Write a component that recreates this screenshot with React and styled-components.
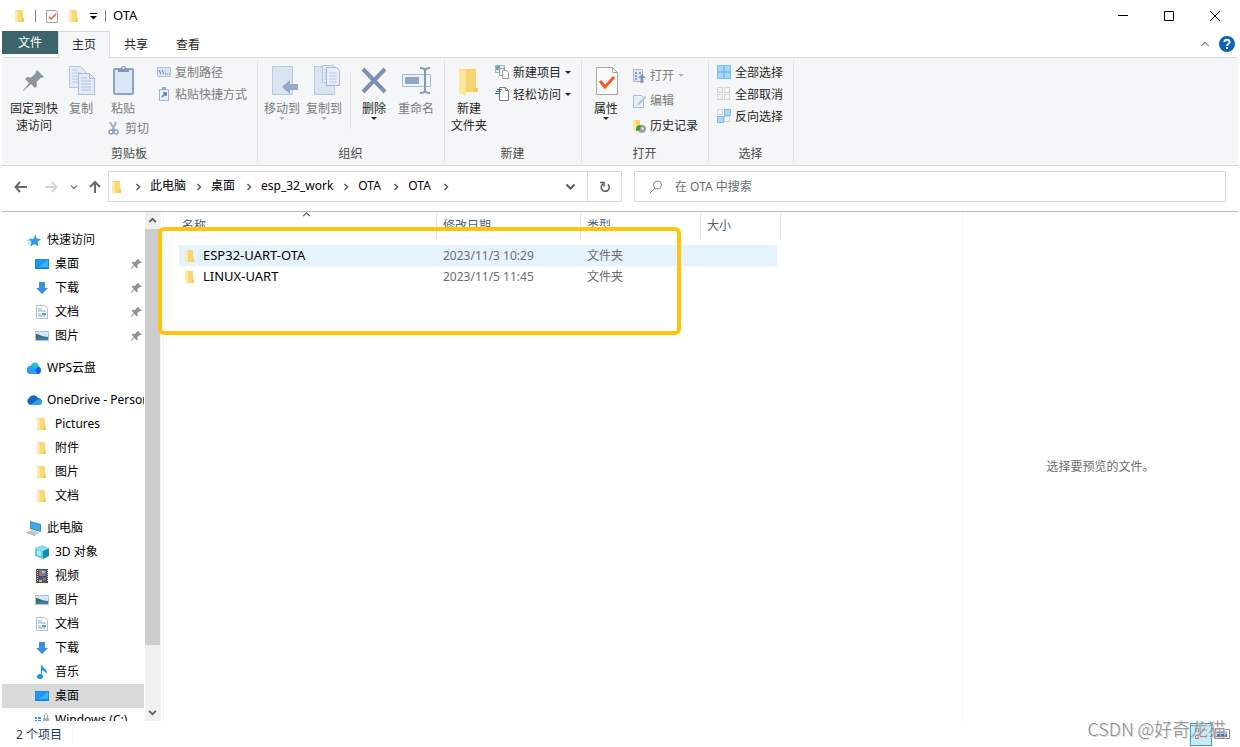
import React, { useState } from 'react';
import styled, { createGlobalStyle } from 'styled-components';

const GlobalStyle = createGlobalStyle`
  * {
    box-sizing: border-box;
  }

  body {
    margin: 0;
    background-color: #ffffff;
  }

  body, button, input, table {
    font-family: "Noto Sans", "Noto Sans CJK SC", sans-serif;
    font-size: 12px;
    line-height: 17px;
    color: #000000;
  }

  button {
    padding: 0;
    border: none;
    background: transparent;
  }

  svg {
    display: block;
    flex: none;
  }
`;

const PageWrapper = styled.div`
  position: relative;
  height: 100vh;
  padding: 0 2px;
  display: flex;
  flex-direction: column;
  overflow: hidden;
`;

const TitleBar = styled.header`
  height: 31px;
  flex: none;
  padding-left: 10px;
  display: flex;
  align-items: center;
  gap: 7px;
`;

const TitleDivider = styled.span`
  width: 1px;
  height: 12px;
  background-color: #808080;
`;

const WindowTitle = styled.span`
  font-size: 13px;
`;

const WindowButtons = styled.div`
  margin-left: auto;
  align-self: stretch;
  display: flex;
`;

const WindowButton = styled.button`
  width: 46px;
  display: flex;
  align-items: center;
  justify-content: center;
`;

const TabRow = styled.nav`
  height: 27px;
  flex: none;
  display: flex;
  border-bottom: 1px solid #dadbdc;
`;

const FileTab = styled.button`
  width: 56px;
  height: 23px;
  color: #ffffff;
  background-color: #3d646a;
`;

const Tab = styled.button`
  width: 52px;
  height: 27px;
  padding-bottom: 2px;
  color: #262626;
  border: 1px solid ${({ $active }) => ($active ? '#dadbdc' : 'transparent')};
  border-bottom: none;
  background-color: ${({ $active }) => ($active ? '#f5f6f7' : 'transparent')};
`;

const TabTools = styled.div`
  margin-left: auto;
  padding-right: 3px;
  display: flex;
  align-items: center;
  gap: 9px;
`;

const RibbonWrapper = styled.div`
  height: 108px;
  flex: none;
  display: flex;
  background-color: #f5f6f7;
  border-bottom: 1px solid #dadbdc;
`;

const Group = styled.section`
  position: relative;
  display: flex;
  flex-direction: column;

  &::after {
    content: '';
    position: absolute;
    top: 2px;
    right: 0;
    bottom: 3px;
    width: 1px;
    background-color: #e2e3e4;
  }
`;

const GroupBody = styled.div`
  height: 87px;
  padding-right: ${({ $right }) => $right}px;
  padding-left: ${({ $left }) => $left || 0}px;
  display: flex;
  align-items: flex-start;
`;

const GroupTitle = styled.h2`
  margin: 0;
  padding-right: 2px;
  font-size: 12px;
  font-weight: normal;
  color: #4a4a4a;
  text-align: center;
`;

const LargeButton = styled.button`
  width: ${({ $width }) => $width || 42}px;
  padding-top: 7px;
  display: flex;
  flex-direction: column;
  align-items: center;
  color: ${({ disabled }) => (disabled ? '#7b7b7b' : '#262626')};
  white-space: pre;
`;

const LargeLabel = styled.span`
  margin-top: 3px;
`;

const ButtonColumn = styled.div`
  padding-top: ${({ $top }) => $top || 0}px;
  margin-left: ${({ $left }) => $left || 0}px;
  display: flex;
  flex-direction: column;
`;

const SmallButton = styled.button`
  height: ${({ $height }) => $height || 22}px;
  padding-left: ${({ $indent }) => $indent || 0}px;
  display: flex;
  align-items: center;
  gap: 4px;
  white-space: nowrap;
  color: ${({ disabled }) => (disabled ? '#7b7b7b' : '#262626')};
`;

const BodyDivider = styled.span`
  width: 1px;
  height: 56px;
  margin: 15px 2px 0 5px;
  background-color: #e2e3e4;
`;

const NavRow = styled.div`
  flex: none;
  padding: 5px 12px 9px 4px;
  display: flex;
  border-bottom: 1px solid #b9b9b9;
`;

const NavButton = styled.button`
  width: ${({ $width }) => $width}px;
  display: flex;
  align-items: center;
  justify-content: center;
`;

const AddressBox = styled.div`
  height: 31px;
  flex: 0 1 514px;
  display: flex;
  align-items: center;
  border: 1px solid #d9d9d9;
`;

const Crumb = styled.button`
  min-width: 25px;
  padding-bottom: 2px;
  text-align: left;
  white-space: nowrap;
`;

const ChevronSlot = styled.span`
  width: 25px;
  display: flex;
  justify-content: center;
`;

const AddressTool = styled.button`
  width: 34px;
  align-self: stretch;
  display: flex;
  align-items: center;
  justify-content: center;
  margin-left: ${({ $last }) => ($last ? '0' : 'auto')};
  border-left: ${({ $last }) => ($last ? '1px solid #d9d9d9' : 'none')};
`;

const SearchBox = styled.label`
  height: 31px;
  flex: 1;
  margin-left: 12px;
  padding-left: 13px;
  display: flex;
  align-items: center;
  gap: 11px;
  border: 1px solid #d9d9d9;
`;

const SearchInput = styled.input`
  flex: 1;
  padding: 0;
  border: none;
  outline: none;

  &::placeholder {
    color: #6d6d6d;
    opacity: 1;
  }
`;

const Main = styled.main`
  flex: 1;
  min-height: 0;
  display: flex;
`;

const Sidebar = styled.aside`
  width: 142px;
  flex: none;
  padding-top: 16px;
  overflow: hidden;
`;

const TreeGroup = styled.div`
  margin-bottom: 8px;
`;

const TreeItem = styled.button`
  width: 100%;
  height: 24px;
  padding-left: ${({ $child }) => ($child ? 32 : 24)}px;
  padding-right: 2px;
  display: flex;
  align-items: center;
  gap: 5px;
  white-space: nowrap;
  background-color: ${({ $selected }) => ($selected ? '#d9d9d9' : 'transparent')};
`;

const TreeLabel = styled.span`
  padding-bottom: 2px;
`;

const PinSlot = styled.span`
  margin-left: auto;
`;

const ScrollBar = styled.div`
  width: 16px;
  flex: none;
  margin-left: 1px;
  display: flex;
  flex-direction: column;
  background-color: #f0f0f0;
  border-right: 1px solid #f8f8f8;
`;

const ScrollArrow = styled.button`
  height: 17px;
  display: flex;
  align-items: center;
  justify-content: center;
`;

const ScrollThumb = styled.div`
  flex: 7;
  background-color: #cdcdcd;
`;

const ScrollRest = styled.div`
  flex: 1;
`;

const FilePane = styled.div`
  flex: 1;
  min-width: 0;
  margin-left: 2px;
  padding-left: 15px;
  border-left: 1px solid #f2f2f2;
`;

const FileTable = styled.table`
  width: 602px;
  table-layout: fixed;
  border-collapse: separate;
  border-spacing: 0;

  tbody::before {
    content: '';
    display: block;
    height: 5px;
  }
`;

const HeaderCell = styled.th`
  position: relative;
  width: ${({ $width }) => $width}px;
  height: 28px;
  padding: 0 0 2px ${({ $first }) => ($first ? 3 : 6)}px;
  font-weight: normal;
  text-align: left;
  color: #4c607a;
  border-right: 1px solid #e5e5e5;
`;

const SortMark = styled.span`
  position: absolute;
  top: -2px;
  left: 50%;
  margin-left: -6px;
`;

const Row = styled.tr`
  td {
    background-color: ${({ $selected }) => ($selected ? '#e5f3ff' : 'transparent')};
  }
`;

const Cell = styled.td`
  height: 21px;
  padding: 0 0 0 6px;
  color: #6d6d6d;

  &:last-child {
    border-right: 4px solid transparent;
    background-clip: padding-box;
  }
`;

const FileName = styled.span`
  margin-left: -3px;
  display: flex;
  align-items: center;
  gap: 5px;
  font-size: 13px;
  color: #000000;
`;

const Preview = styled.aside`
  width: 276px;
  flex: none;
  display: flex;
  align-items: center;
  justify-content: center;
  color: #6d6d6d;
  border-left: 1px solid #f5f5f5;
`;

const StatusBar = styled.footer`
  height: 26px;
  flex: none;
  padding: 0 7px 0 14px;
  display: flex;
  align-items: center;
  color: #1e395b;
`;

const StatusCount = styled.span`
  padding-right: 10px;
  border-right: 1px solid #f2f2f2;
`;

const ViewButtons = styled.div`
  margin-left: auto;
  display: flex;
`;

const ViewButton = styled.button`
  width: ${({ $active }) => ($active ? 22 : 19)}px;
  height: 23px;
  display: flex;
  align-items: center;
  justify-content: center;
  border: ${({ $active }) => ($active ? '1px solid #26a0da' : 'none')};
  background-color: ${({ $active }) => ($active ? '#cbe8f6' : 'transparent')};
`;

const Highlight = styled.div`
  position: absolute;
  top: 227px;
  left: 158px;
  width: 523px;
  height: 108px;
  border: 4px solid #ffc40c;
  border-radius: 6px;
  pointer-events: none;
`;

const Watermark = styled.div`
  position: absolute;
  right: 14px;
  bottom: 7px;
  font-family: "Noto Sans CJK SC", sans-serif;
  font-size: 18px;
  font-weight: 300;
  line-height: 24px;
  color: #8c8c8c;
  text-shadow: 1px 1px 0 #d8d8d8;
  pointer-events: none;
`;

const Svg = ({ size = 16, w, h, children }) => (
  <svg width={w || size} height={h || size} viewBox={`0 0 ${w || size} ${h || size}`} fill="none" aria-hidden="true">
    {children}
  </svg>
);

const FolderIcon = () => (
  <Svg>
    <path d="M3 2h8v12H3z" fill="#f8d775" />
    <path d="M11 10h1v4h-3z" fill="#f3c75a" />
    <path d="M3 2l3 1v12l-3-1z" fill="#ffe9a6" />
  </Svg>
);

const CheckPageIcon = () => (
  <Svg>
    <path d="M3.500 2.500h9l2 2v10h-11z" fill="#f7f7f7" stroke="#a3a3a3" />
    <path d="M6 9l2 2 5-5" stroke="#e8643a" strokeWidth="1.500" />
  </Svg>
);

const DropIcon = ({ color = '#262626' }) => (
  <Svg w={6} h={3}>
    <path d="M0 0h6L3 3z" fill={color} />
  </Svg>
);

const Chevron = ({ dir = 'right', color = '#5c5c5c', size = 8, width = 1.5 }) => {
  const paths = {
    right: 'M2.500 1l3 3-3 3',
    down: 'M1 2.500l3 3 3-3',
    up: 'M1 5.500l3-3 3 3',
  };
  return (
    <svg width={size} height={size} viewBox="0 0 8 8" fill="none" aria-hidden="true">
      <path d={paths[dir]} stroke={color} strokeWidth={width} />
    </svg>
  );
};

const PinIcon = ({ size = 12 }) => (
  <svg width={size} height={size} viewBox="0 0 24 24" aria-hidden="true">
    <path d="M15 1l8 8-2 1.500-1.500-.5-4.500 4 .5 5-2 2-4.500-5L2 22.500 1 22l6.500-8L3 9.500l2-2 5 .5 4-4.500z" fill="#8b969f" />
  </svg>
);

const BigPinIcon = () => (
  <Svg size={32}>
    <path d="M19 5l7 7-2 1-1-.5-4.500 4.500.5 4-2 2-4-4-7.500 7-.5-.5 6-7.500-4-4 2-2 4 .5 5-4.500-.5-1z" fill="#8b969f" />
  </Svg>
);

const BigCopyIcon = () => (
  <Svg size={32}>
    <path d="M4.500 1.500h11l5 5v16h-16z" fill="#e3ebf6" stroke="#b5c5dc" />
    <path d="M7 8h9M7 11h8M7 14h8M7 17h8M7 5h6" stroke="#b9cae2" />
    <path d="M13.500 8.500h11l5 5v16h-16z" fill="#e3ebf6" stroke="#a9bbd5" />
    <path d="M24.500 8.500v5h5" stroke="#a9bbd5" />
    <path d="M16 13h6M16 16h10M16 19h10M16 22h10M16 25h10" stroke="#aec1dc" />
  </Svg>
);

const BigPasteIcon = () => (
  <Svg size={32}>
    <rect x="7" y="4" width="19" height="25" rx="1" fill="#dce7f5" stroke="#8fa3c4" strokeWidth="2" />
    <path d="M11 7V4h3c0-4 5-4 5 0h3v3z" fill="#8496b5" />
    <circle cx="16.500" cy="3" r="1" fill="#f5f6f7" />
  </Svg>
);

const BigMoveIcon = () => (
  <Svg size={32}>
    <path d="M6.500 1.500h20v28h-20z" fill="#dbe5f2" stroke="#b9c8dd" />
    <path d="M16 22l8-7v4h8v6h-8v4z" fill="#97a9c4" />
  </Svg>
);

const BigCopyToIcon = () => (
  <Svg size={32}>
    <path d="M6.500 1.500h20v28h-20z" fill="#dbe5f2" stroke="#b9c8dd" />
    <path d="M14.500.500h11l3 3v14h-14z" fill="#e8eff8" stroke="#b0c1d9" />
    <path d="M18.500 2.500h10l3 3v15h-13z" fill="#e8eff8" stroke="#a3b6d2" />
    <path d="M21 8h8M21 11h8M21 14h8M21 17h8M16 5h2M16 8h2M16 11h2M16 14h2" stroke="#b3c4dd" />
  </Svg>
);

const BigDeleteIcon = () => (
  <Svg size={32}>
    <path d="M5 4l22 23M27 4L5 27" stroke="#7f91b0" strokeWidth="4" />
  </Svg>
);

const BigRenameIcon = () => (
  <Svg size={32}>
    <path d="M2.500 9.500h28v12h-28z" fill="#edf3fa" stroke="#a9bad3" />
    <path d="M5 12h14v7H5z" fill="#92a5c4" />
    <path d="M20 3c3 0 5 1 5 3 0-2 2-3 5-3M25 5v22M20 28c3 0 5-1 5-3 0 2 2 3 5 3" stroke="#8598b8" strokeWidth="2" />
  </Svg>
);

const BigFolderIcon = () => (
  <Svg size={32}>
    <path d="M7 4h16v23H7z" fill="#f6d574" />
    <path d="M20 23h5v4h-5z" fill="#f3c75a" />
    <path d="M6 3l7 3v25l-7-3z" fill="#ffe69a" />
  </Svg>
);

const BigPropertiesIcon = () => (
  <Svg size={32}>
    <path d="M6.500 2.500h16l5 5v22h-21z" fill="#fafafa" stroke="#a6a6a6" />
    <path d="M22.500 2.500v5h5" stroke="#a6a6a6" />
    <path d="M10 16l5 6 9-10" stroke="#ef5a24" strokeWidth="3" />
  </Svg>
);

const CopyPathIcon = () => (
  <Svg size={14}>
    <path d="M.500 2.500h13v9H.500z" fill="#d9e4f3" stroke="#b4c4dc" />
    <path d="M2 5l2 4M5 5l2 4M8 9h1M10 9h1M12 9h1" stroke="#6d80a3" />
  </Svg>
);

const PasteShortcutIcon = () => (
  <Svg size={14}>
    <path d="M2.500 2.500h9v11h-9z" fill="#e4edf8" stroke="#9fb2ce" />
    <path d="M5 0h4v3H5z" fill="#9aacc8" />
    <path d="M5 10l4-4M6 6h3v3" stroke="#5e759f" strokeWidth="1.500" />
  </Svg>
);

const CutIcon = () => (
  <Svg size={14}>
    <path d="M3 1l5 9M9 1L5 10" stroke="#a4b1c6" strokeWidth="2" />
    <circle cx="4" cy="11" r="2" stroke="#8f9fba" strokeWidth="1.500" />
    <circle cx="9" cy="11" r="2" stroke="#8f9fba" strokeWidth="1.500" />
  </Svg>
);

const NewItemIcon = () => (
  <Svg size={14}>
    <path d="M.500.500h9v7h-9z" fill="#e5f0f5" stroke="#a3b5bd" />
    <path d="M1 1h4v4H1z" fill="#6fa3b6" />
    <path d="M4.500 3.500h5v7h-5z" fill="#f2f2f2" stroke="#9b9b9b" />
    <path d="M7.500 5.500h4l2 2v6h-6z" fill="#fafafa" stroke="#9b9b9b" />
  </Svg>
);

const EasyAccessIcon = () => (
  <Svg size={14}>
    <path d="M4.500.500h6l3 3v10h-9z" fill="#ffffff" stroke="#7d7d7d" />
    <path d="M10.500.500v3h3" stroke="#7d7d7d" />
    <path d="M2 2.500h5M1 4.500h5M0 6.500h5" stroke="#2c6ca5" />
  </Svg>
);

const OpenIcon = () => (
  <Svg size={14}>
    <path d="M1.500.500h9v12h-9z" fill="#dde7f4" stroke="#a9b9d2" />
    <path d="M3 3h2v2H3zM3 6h2v2H3zM3 9h2v2H3zM7 3h2v2H7z" fill="#8d9fbd" />
    <path d="M10 5l4 4h-2.500v5h-3V9H6z" fill="#8597b7" />
  </Svg>
);

const EditIcon = () => (
  <Svg size={14}>
    <path d="M1.500 1.500h8l2 2v10h-10z" fill="#e6eef8" stroke="#abbbd3" />
    <path d="M5 12l1-3 7-7 1.500 1.500-7 7z" fill="#b5c5dd" />
  </Svg>
);

const HistoryIcon = () => (
  <Svg size={14}>
    <path d="M1 1h7v10H1z" fill="#f6d06b" />
    <path d="M1 1l3 1v11l-3-1z" fill="#ffe69a" />
    <circle cx="10" cy="10" r="4" fill="#9da3a3" />
    <path d="M10 8v2h2" stroke="#ffffff" />
    <path d="M4 12c0-4 1-6 5-6l-1 5z" fill="#32a042" />
  </Svg>
);

// on: which of the four tiles are filled
const TilesIcon = ({ on }) => (
  <Svg size={14}>
    {[[0, 0], [7, 0], [0, 7], [7, 7]].map(([x, y], i) => (
      <rect
        key={i}
        x={x + 0.5}
        y={y + 0.5}
        width={on[i] ? 6 : 5}
        height={on[i] ? 6 : 5}
        fill={on[i] ? '#a6d8fc' : '#f4f4f4'}
        stroke={on[i] ? '#7fbfe9' : '#d4d4d4'}
      />
    ))}
  </Svg>
);

const StarIcon = () => (
  <Svg>
    <path d="M9.500 2l1 4.500 4.500.5-3.500 3 1 4.500L8.500 12 4 14.500 5.500 10 2.500 6.500l5 .5z" fill="#2d9be8" />
    <path d="M2 12l3-2M1 9l3-1" stroke="#8ccaf5" />
  </Svg>
);

const DesktopIcon = () => (
  <Svg>
    <path d="M1 3h14v10H1z" fill="#1583d8" />
    <path d="M1.500 3.500h13v8h-13z" fill="#199bf5" />
    <path d="M14 4v7H5z" fill="#3db0fb" />
  </Svg>
);

const DownloadIcon = () => (
  <Svg>
    <path d="M5 2h6v6h3l-6 6-6-6h3z" fill="#3b93e0" />
  </Svg>
);

const DocIcon = () => (
  <Svg>
    <path d="M2.500 1.500h8l3 3v10h-11z" fill="#fcfcfc" stroke="#b8bfc4" />
    <path d="M4 5h4M4 7h8M4 10h3M4 12h8" stroke="#7fb0d2" />
    <path d="M8 9h4v2H8z" fill="#5b9bc8" />
  </Svg>
);

const PictureIcon = () => (
  <Svg>
    <path d="M1.500 3.500h13v9h-13z" fill="#cfe9fa" stroke="#b5bdc3" />
    <path d="M2 6c4 0 5 3 12 3v1H2z" fill="#3e6f6a" />
    <path d="M2 10h12v2H2z" fill="#3b7eb5" />
  </Svg>
);

const WpsIcon = () => (
  <Svg>
    <path d="M5 14a4 4 0 0 1 0-8A4 4 0 0 1 12 6c4 1 4 8 0 8z" fill="#1b5cf2" />
    <path d="M5 14a4 4 0 0 1 0-8c3 0 5 4 6 8z" fill="#2a9df4" />
    <path d="M5 6c0-4 7-5 7.500 0L9 10C8 8 7 6 5 6z" fill="#1fc6c8" />
  </Svg>
);

const OneDriveIcon = () => (
  <Svg>
    <path d="M4 13a4 4 0 0 1-1-7A5 5 0 0 1 12 6c5 0 5 7 1 7z" fill="#0f6cbd" />
    <path d="M4 13l9-6c4 1 3 6 0 6z" fill="#2aa3ea" />
  </Svg>
);

const ComputerIcon = () => (
  <Svg>
    <path d="M4 1l11 3v8L4 9z" fill="#4b87ad" />
    <path d="M5 2l9 3v6L5 8z" fill="#37aaf2" />
    <path d="M1 12l5-2 8 3-5 2z" fill="#c3c9ce" />
    <path d="M1 12l8 3v1l-8-3z" fill="#8c969d" />
  </Svg>
);

const CubeIcon = () => (
  <Svg>
    <path d="M1 4l7-3 7 3-6 3z" fill="#83dff0" />
    <path d="M1 4l8 3v8l-8-3z" fill="#5fcde3" />
    <path d="M9 7l6-3v8l-6 3z" fill="#138fb0" />
    <path d="M3 6l4 1v5l-4-1z" fill="#a9eaf5" />
  </Svg>
);

const VideoIcon = () => (
  <Svg>
    <path d="M2 1h12v14H2z" fill="#4b4b4b" />
    <path d="M5 2h7v6H5z" fill="#5c7fc4" />
    <path d="M5 9h7v5H5z" fill="#3560a8" />
    <path d="M5 5h3v3H5zM9 10h3v2H9z" fill="#d5622d" />
    <path d="M8 3h3v2H8zM5 12h3v2H5z" fill="#e0bd3f" />
    <path d="M3.500 2v12M13.500 2v12" stroke="#cfcfcf" strokeDasharray="1 1" />
  </Svg>
);

const MusicIcon = () => (
  <Svg>
    <path d="M8 1c0 3 6 4 5 9-1-2-3-3-5-4v7H7V1z" fill="#1b93e6" />
    <ellipse cx="6" cy="12.500" rx="3" ry="2.500" fill="#1b93e6" />
  </Svg>
);

const DriveIcon = () => (
  <Svg>
    <path d="M1 5h2v2H1zM4 5h3v2H4zM1 8h2v3H1zM4 8h3v3H4z" fill="#18a3e8" />
    <path d="M9 6h6v6H9z" fill="#a8adb1" />
    <path d="M10.500 6V4c0-3 3-3 3 0v2" stroke="#a8adb1" />
  </Svg>
);

const SearchIcon = () => (
  <Svg>
    <circle cx="9.500" cy="6" r="4" stroke="#8585a0" />
    <path d="M7 9l-5 5" stroke="#8585a0" />
  </Svg>
);

const RefreshIcon = () => (
  <Svg size={14}>
    <path d="M5 4A4 4 0 1 0 10 4.500" stroke="#5c5c5c" strokeWidth="1.500" />
    <path d="M2 2.500h4v4" stroke="#5c5c5c" strokeWidth="1.500" />
  </Svg>
);

const ArrowIcon = ({ d, color }) => (
  <Svg>
    <path d={d} stroke={color} strokeWidth="2" />
  </Svg>
);

const HelpIcon = () => (
  <Svg>
    <circle cx="8" cy="8" r="8" fill="#0b62c1" />
    <path d="M5.500 6c0-3 5-3 5 0 0 2-2.500 1.500-2.500 4M8 11v2" stroke="#ffffff" strokeWidth="2" />
  </Svg>
);

const tree = [
  [
    { name: '快速访问', Icon: StarIcon },
    { name: '桌面', Icon: DesktopIcon, pinned: true },
    { name: '下载', Icon: DownloadIcon, pinned: true },
    { name: '文档', Icon: DocIcon, pinned: true },
    { name: '图片', Icon: PictureIcon, pinned: true },
  ],
  [{ name: 'WPS云盘', Icon: WpsIcon }],
  [
    { name: 'OneDrive - Personal', Icon: OneDriveIcon },
    { name: 'Pictures', Icon: FolderIcon },
    { name: '附件', Icon: FolderIcon },
    { name: '图片', Icon: FolderIcon },
    { name: '文档', Icon: FolderIcon },
  ],
  [
    { name: '此电脑', Icon: ComputerIcon },
    { name: '3D 对象', Icon: CubeIcon },
    { name: '视频', Icon: VideoIcon },
    { name: '图片', Icon: PictureIcon },
    { name: '文档', Icon: DocIcon },
    { name: '下载', Icon: DownloadIcon },
    { name: '音乐', Icon: MusicIcon },
    { name: '桌面', Icon: DesktopIcon },
    { name: 'Windows (C:)', Icon: DriveIcon },
  ],
];

const crumbs = ['此电脑', '桌面', 'esp_32_work', 'OTA', 'OTA'];

const files = [
  { name: 'ESP32-UART-OTA', date: '2023/11/3 10:29', type: '文件夹' },
  { name: 'LINUX-UART', date: '2023/11/5 11:45', type: '文件夹' },
];

const Large = ({ icon, label, width, drop, disabled }) => (
  <LargeButton $width={width} disabled={disabled}>
    {icon}
    <LargeLabel>{label}</LargeLabel>
    {drop && <DropIcon color={disabled ? '#b5b5b5' : '#262626'} />}
  </LargeButton>
);

const Small = ({ icon, label, height, indent, drop, disabled }) => (
  <SmallButton $height={height} $indent={indent} disabled={disabled}>
    {icon}
    {label}
    {drop && <DropIcon color={disabled ? '#b5b5b5' : '#262626'} />}
  </SmallButton>
);

const Ribbon = () => (
  <RibbonWrapper>
    <Group>
      <GroupBody $left={6} $right={11}>
        <Large width={52} icon={<BigPinIcon />} label={'固定到快\n速访问'} />
        <Large icon={<BigCopyIcon />} label="复制" disabled />
        <ButtonColumn>
          <Large icon={<BigPasteIcon />} label="粘贴" disabled />
          <Small indent={5} icon={<CutIcon />} label="剪切" disabled />
        </ButtonColumn>
        <ButtonColumn $top={3} $left={8}>
          <Small icon={<CopyPathIcon />} label="复制路径" disabled />
          <Small icon={<PasteShortcutIcon />} label="粘贴快捷方式" disabled />
        </ButtonColumn>
      </GroupBody>
      <GroupTitle>剪贴板</GroupTitle>
    </Group>
    <Group>
      <GroupBody $left={3} $right={8}>
        <Large icon={<BigMoveIcon />} label="移动到" drop disabled />
        <Large icon={<BigCopyToIcon />} label="复制到" drop disabled />
        <BodyDivider />
        <Large icon={<BigDeleteIcon />} label="删除" drop />
        <Large icon={<BigRenameIcon />} label="重命名" disabled />
      </GroupBody>
      <GroupTitle>组织</GroupTitle>
    </Group>
    <Group>
      <GroupBody $right={11}>
        <Large width={48} icon={<BigFolderIcon />} label={'新建\n文件夹'} />
        <ButtonColumn $top={3} $left={2}>
          <Small icon={<NewItemIcon />} label="新建项目" drop />
          <Small icon={<EasyAccessIcon />} label="轻松访问" drop />
        </ButtonColumn>
      </GroupBody>
      <GroupTitle>新建</GroupTitle>
    </Group>
    <Group>
      <GroupBody $right={11}>
        <Large width={48} icon={<BigPropertiesIcon />} label="属性" drop />
        <ButtonColumn $top={5} $left={2}>
          <Small height={25} icon={<OpenIcon />} label="打开" drop disabled />
          <Small height={25} icon={<EditIcon />} label="编辑" disabled />
          <Small height={25} icon={<HistoryIcon />} label="历史记录" />
        </ButtonColumn>
      </GroupBody>
      <GroupTitle>打开</GroupTitle>
    </Group>
    <Group>
      <GroupBody $left={8} $right={11}>
        <ButtonColumn $top={3}>
          <Small icon={<TilesIcon on={[1, 1, 1, 1]} />} label="全部选择" />
          <Small icon={<TilesIcon on={[0, 0, 0, 0]} />} label="全部取消" />
          <Small icon={<TilesIcon on={[0, 1, 1, 0]} />} label="反向选择" />
        </ButtonColumn>
      </GroupBody>
      <GroupTitle>选择</GroupTitle>
    </Group>
  </RibbonWrapper>
);

const App = () => {
  const [activeTab, setActiveTab] = useState('主页');
  const [selectedNode, setSelectedNode] = useState('3-7');
  const [selectedFile, setSelectedFile] = useState(0);
  const [query, setQuery] = useState('');

  return (
    <PageWrapper>
      <GlobalStyle />
      <TitleBar>
        <FolderIcon />
        <TitleDivider />
        <CheckPageIcon />
        <FolderIcon />
        <Svg w={9} h={8}>
          <path d="M1 1.500h7" stroke="#000000" />
          <path d="M1 4h7L4.500 7.500z" fill="#000000" />
        </Svg>
        <TitleDivider />
        <WindowTitle>OTA</WindowTitle>
        <WindowButtons>
          <WindowButton aria-label="最小化">
            <Svg size={10}><path d="M0 4.500h10" stroke="#000000" /></Svg>
          </WindowButton>
          <WindowButton aria-label="最大化">
            <Svg size={10}><path d="M.500.500h9v9h-9z" stroke="#000000" /></Svg>
          </WindowButton>
          <WindowButton aria-label="关闭">
            <Svg size={10}><path d="M0 0l10 10M10 0L0 10" stroke="#000000" /></Svg>
          </WindowButton>
        </WindowButtons>
      </TitleBar>

      <TabRow>
        <FileTab>文件</FileTab>
        {['主页', '共享', '查看'].map((tab) => (
          <Tab key={tab} $active={tab === activeTab} onClick={() => setActiveTab(tab)}>
            {tab}
          </Tab>
        ))}
        <TabTools>
          <button aria-label="折叠功能区"><Chevron dir="up" color="#8c8c8c" size={10} width={1} /></button>
          <button aria-label="帮助"><HelpIcon /></button>
        </TabTools>
      </TabRow>

      <Ribbon />

      <NavRow>
        <NavButton $width={30} aria-label="后退">
          <ArrowIcon d="M14 8H3M7 3L2.500 8 7 13" color="#6b6b6b" />
        </NavButton>
        <NavButton $width={30} aria-label="前进">
          <ArrowIcon d="M2 8h11M9 3l4.500 5L9 13" color="#d6d6d6" />
        </NavButton>
        <NavButton $width={16} aria-label="最近浏览的位置">
          <Chevron dir="down" color="#7d7d7d" />
        </NavButton>
        <NavButton $width={26} aria-label="上移">
          <ArrowIcon d="M8 14V3M3 8l5-5 5 5" color="#6b6b6b" />
        </NavButton>
        <AddressBox>
          <FolderIcon />
          <ChevronSlot><Chevron /></ChevronSlot>
          {crumbs.map((crumb, i) => (
            <React.Fragment key={`crumb-${i}`}>
              <Crumb>{crumb}</Crumb>
              <ChevronSlot><Chevron /></ChevronSlot>
            </React.Fragment>
          ))}
          <AddressTool aria-label="以前的位置"><Chevron dir="down" size={11} /></AddressTool>
          <AddressTool $last aria-label="刷新"><RefreshIcon /></AddressTool>
        </AddressBox>
        <SearchBox>
          <SearchIcon />
          <SearchInput
            aria-label="搜索"
            placeholder="在 OTA 中搜索"
            value={query}
            onChange={(e) => setQuery(e.target.value)}
          />
        </SearchBox>
      </NavRow>

      <Main>
        <Sidebar>
          {tree.map((nodes, g) => (
            <TreeGroup key={`group-${g}`}>
              {nodes.map(({ name, Icon, pinned }, i) => (
                <TreeItem
                  key={`node-${g}-${i}`}
                  $child={i > 0}
                  $selected={selectedNode === `${g}-${i}`}
                  onClick={() => setSelectedNode(`${g}-${i}`)}
                >
                  <Icon />
                  <TreeLabel>{name}</TreeLabel>
                  {pinned && <PinSlot><PinIcon /></PinSlot>}
                </TreeItem>
              ))}
            </TreeGroup>
          ))}
        </Sidebar>
        <ScrollBar>
          <ScrollArrow aria-label="向上滚动"><Chevron dir="up" size={9} /></ScrollArrow>
          <ScrollThumb />
          <ScrollRest />
          <ScrollArrow aria-label="向下滚动"><Chevron dir="down" size={9} /></ScrollArrow>
        </ScrollBar>
        <FilePane>
          <FileTable>
            <thead>
              <tr>
                <HeaderCell $width={258} $first>
                  名称
                  <SortMark><Chevron dir="up" size={9} width={1} /></SortMark>
                </HeaderCell>
                <HeaderCell $width={144}>修改日期</HeaderCell>
                <HeaderCell $width={120}>类型</HeaderCell>
                <HeaderCell $width={80}>大小</HeaderCell>
              </tr>
            </thead>
            <tbody>
              {files.map((file, i) => (
                <Row key={file.name} $selected={i === selectedFile} onClick={() => setSelectedFile(i)}>
                  <Cell>
                    <FileName>
                      <FolderIcon />
                      {file.name}
                    </FileName>
                  </Cell>
                  <Cell>{file.date}</Cell>
                  <Cell>{file.type}</Cell>
                  <Cell />
                </Row>
              ))}
            </tbody>
          </FileTable>
        </FilePane>
        <Preview>选择要预览的文件。</Preview>
      </Main>

      <StatusBar>
        <StatusCount>2 个项目</StatusCount>
        <ViewButtons>
          <ViewButton $active aria-label="详细信息">
            <Svg>
              <path d="M2.500 2.500h3v3h-3zM2.500 9.500h3v3h-3z" fill="#ffffff" stroke="#8a8a8a" />
              <path d="M8 4h6M8 11h6" stroke="#6d8ba0" />
              <path d="M4 11h1" stroke="#d23c2a" />
            </Svg>
          </ViewButton>
          <ViewButton aria-label="大图标">
            <Svg>
              <path d="M.500 3.500h15v9H.500z" fill="#ffffff" stroke="#8a8a8a" />
              <path d="M3 5h10v3H3z" fill="#8cc4f0" />
              <path d="M3 8h10v3H3z" fill="#2f6fae" />
            </Svg>
          </ViewButton>
        </ViewButtons>
      </StatusBar>

      <Highlight />
      <Watermark>CSDN @好奇龙猫</Watermark>
    </PageWrapper>
  );
};

export default App;
